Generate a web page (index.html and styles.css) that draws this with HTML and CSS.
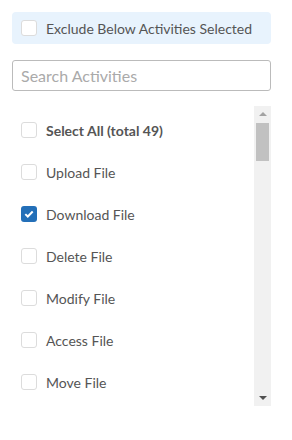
FILE: index.html
```html
<!DOCTYPE html>
<html lang="en">
<head>
    <meta charset="UTF-8">
    <title>Activities</title>
    <link rel="stylesheet" href="styles.css">
</head>
<body>
    <div class="panel">
        <label class="exclude">
            <span class="box"></span>
            <span>Exclude Below Activities Selected</span>
        </label>

        <input type="text" class="search" placeholder="Search Activities">

        <div class="list-wrap">
            <ul class="list">
                <li class="item all"><span class="box"></span><span>Select All (total 49)</span></li>
                <li class="item"><span class="box"></span><span>Upload File</span></li>
                <li class="item"><span class="box checked"><svg width="10" height="8" viewBox="0 0 10 8"><path d="M1.3 4.1 L3.8 6.5 L8.7 1.5" fill="none" stroke="#fff" stroke-width="2"/></svg></span><span>Download File</span></li>
                <li class="item"><span class="box"></span><span>Delete File</span></li>
                <li class="item"><span class="box"></span><span>Modify File</span></li>
                <li class="item"><span class="box"></span><span>Access File</span></li>
                <li class="item"><span class="box"></span><span>Move File</span></li>
            </ul>
            <div class="scrollbar">
                <span class="arrow up"></span>
                <span class="thumb"></span>
                <span class="arrow down"></span>
            </div>
        </div>
    </div>
</body>
</html>
```

FILE: styles.css
```css
body {
    margin: 0;
    background: #fff;
    font-family: Lato, "Open Sans", sans-serif;
    color: #555;
}

.panel {
    width: 259px;
    padding: 12px;
}

.box {
    width: 14px;
    height: 14px;
    border: 1px solid #dcdcdc;
    border-radius: 3px;
    background: #fff;
    flex-shrink: 0;
    display: flex;
    align-items: center;
    justify-content: center;
}

.box.checked {
    width: 16px;
    height: 16px;
    border: none;
    background: #236fb8;
}

.exclude {
    display: flex;
    align-items: center;
    gap: 9px;
    height: 32px;
    padding-left: 9px;
    background: #e8f3fd;
    border-radius: 4px;
    font-size: 14px;
}

.search {
    display: block;
    width: 100%;
    height: 31px;
    margin-top: 16px;
    padding: 0 8px;
    box-sizing: border-box;
    border: 1px solid #bbb;
    border-radius: 3px;
    font-family: Lato, sans-serif;
    font-size: 16px;
    color: #555;
}

.search::placeholder {
    color: #aaa;
}

.list-wrap {
    display: flex;
    height: 300px;
    margin-top: 15px;
    overflow: hidden;
}

.list {
    flex: 1;
    list-style: none;
    margin: 0;
    padding: 3px 0 0 9px;
}

.item {
    display: flex;
    align-items: center;
    gap: 9px;
    height: 42px;
    font-size: 14px;
}

.item.all {
    font-weight: bold;
}

.scrollbar {
    width: 17px;
    background: #f1f1f1;
    display: flex;
    flex-direction: column;
    align-items: center;
}

.arrow {
    width: 0;
    height: 0;
    border-left: 4px solid transparent;
    border-right: 4px solid transparent;
}

.arrow.up {
    margin-top: 6px;
    border-bottom: 4px solid #a3a3a3;
}

.arrow.down {
    margin-top: auto;
    margin-bottom: 6px;
    border-top: 4px solid #505050;
}

.thumb {
    width: 13px;
    height: 38px;
    margin-top: 7px;
    background: #c1c1c1;
}
```
